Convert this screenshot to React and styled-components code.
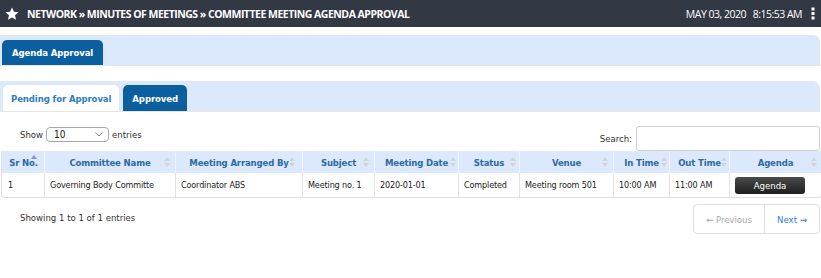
import React from "react";
import styled, { createGlobalStyle } from "styled-components";

const Global = createGlobalStyle`
  html, body { margin: 0; padding: 0; background: #ffffff; }
  body { font-family: "DejaVu Sans Condensed", "DejaVu Sans", sans-serif; }
  * { box-sizing: border-box; }
`;

const Header = styled.header`
  height: 27px;
  background: #323844;
  display: flex;
  align-items: center;
  justify-content: space-between;
  padding: 0 6px 0 5px;
  color: #ffffff;
`;

const HeaderLeft = styled.div`
  display: flex;
  align-items: center;
  gap: 8px;
`;

const Breadcrumb = styled.div`
  font-family: "Open Sans", sans-serif;
  font-weight: 700;
  font-size: 10.5px;
  letter-spacing: -0.5px;
  text-transform: uppercase;
`;

const HeaderRight = styled.div`
  display: flex;
  align-items: center;
  gap: 9px;
  font-family: "Open Sans", sans-serif;
  font-size: 10.5px;
  letter-spacing: -0.5px;
`;

const DateText = styled.span`
  white-space: pre;
`;

const Content = styled.main`
  padding: 8px 1px 0 0;
`;

const TabBar = styled.div`
  height: 31px;
  background: #dce8fb;
  border-radius: 0 7px 0 0;
  border-bottom: 1px solid #e4e6ea;
  display: flex;
  align-items: flex-end;
  gap: 4px;
  padding-left: ${(p) => p.$inset}px;
  margin-top: ${(p) => p.$top}px;
`;

const Tab = styled.div`
  height: ${(p) => p.$h}px;
  padding: 0 ${(p) => p.$px}px;
  display: flex;
  align-items: center;
  border-radius: 5px 5px 0 0;
  font-family: "DejaVu Sans Condensed", "DejaVu Sans", sans-serif;
  font-weight: 700;
  font-size: 9.5px;
  letter-spacing: -0.1px;
  background: ${(p) => (p.$active ? "#0b5f9f" : "#ffffff")};
  color: ${(p) => (p.$active ? "#ffffff" : "#2f7cba")};
`;

const Controls = styled.div`
  display: flex;
  justify-content: space-between;
  align-items: flex-start;
  margin-top: 15px;
  padding-left: 20px;
  font-size: 9.5px;
  color: #333;
`;

const LengthBox = styled.label`
  display: flex;
  align-items: center;
  gap: 3px;
  height: 15px;
`;

const FakeSelect = styled.div`
  width: 63px;
  height: 15px;
  border: 1px solid #a9a9a9;
  border-radius: 4px;
  display: flex;
  align-items: center;
  justify-content: space-between;
  padding: 0 5px 0 7px;
  font-size: 10px;
  color: #222;
  background: #fff;
`;

const SearchBox = styled.label`
  display: flex;
  align-items: center;
  gap: 4px;
  margin-top: -1px;
`;

const SearchInput = styled.div`
  width: 184px;
  height: 25px;
  border: 1px solid #cfcfcf;
  border-radius: 3px;
  background: #fff;
`;

const Table = styled.table`
  width: 819px;
  margin: 0 0 0 1px;
  border-collapse: separate;
  border-spacing: 0;
  border: 1px solid #dedede;
  border-top: none;
  border-radius: 0 0 4px 4px;
  table-layout: fixed;
  font-size: 9px;
  letter-spacing: -0.15px;
`;

const Th = styled.th`
  position: relative;
  height: 22px;
  background: #dce8fb;
  color: #2d6aa6;
  font-weight: 700;
  font-size: 9.5px;
  text-align: center;
  padding: 0 4px;
  border-left: 1px solid ${(p) => (p.$first ? "transparent" : "#f1f5fd")};
  white-space: nowrap;
`;

const SortMark = styled.svg`
  position: absolute;
  right: ${(p) => p.$right}px;
  top: ${(p) => (p.$active ? 4 : 6)}px;
`;

const Td = styled.td`
  height: 24px;
  padding: 0 5px;
  color: #222;
  border-left: 1px solid ${(p) => (p.$first ? "transparent" : "#e3e3e3")};
  white-space: nowrap;
`;

const AgendaButton = styled.button`
  width: 70px;
  height: 17px;
  border: none;
  border-radius: 3px;
  background: linear-gradient(#4a4a4a, #1f1f1f);
  color: #fff;
  font-family: "DejaVu Sans Condensed", "DejaVu Sans", sans-serif;
  font-size: 9.5px;
  padding: 0;
  display: block;
`;

const Footer = styled.div`
  display: flex;
  justify-content: space-between;
  align-items: flex-start;
  margin-top: 6px;
  padding-left: 20px;
  font-size: 9.5px;
  color: #333;
`;

const Info = styled.div`
  padding-top: 8px;
`;

const Pager = styled.div`
  display: flex;
  border: 1px solid #dddddd;
  border-radius: 4px;
  height: 30px;
`;

const PageLink = styled.div`
  display: flex;
  align-items: center;
  justify-content: center;
  width: ${(p) => p.$w}px;
  border-left: ${(p) => (p.$divider ? "1px solid #dddddd" : "none")};
  color: ${(p) => (p.$disabled ? "#a9a9a9" : "#3283c6")};
  font-size: 9.5px;
`;

const Star = () => (
  <svg width="14" height="14" viewBox="0 0 24 24">
    <path
      fill="#ffffff"
      d="M12 1l3.3 7.1 7.7.9-5.8 5.2 1.6 7.7L12 18l-6.8 3.9 1.6-7.7L1 9l7.7-.9z"
    />
  </svg>
);

const Kebab = () => (
  <svg width="4" height="13" viewBox="0 0 4 13">
    <rect x="0.5" y="0.5" width="3" height="3" fill="#fff" />
    <rect x="0.5" y="5" width="3" height="3" fill="#fff" />
    <rect x="0.5" y="9.5" width="3" height="3" fill="#fff" />
  </svg>
);

const Chevron = () => (
  <svg width="8" height="5" viewBox="0 0 8 5">
    <path d="M0.5 0.5L4 4L7.5 0.5" fill="none" stroke="#888" strokeWidth="1" />
  </svg>
);

const Sort = ({ active, right }) => (
  <SortMark $active={active} $right={right} width="6" height="10" viewBox="0 0 6 10">
    <path d="M3 0L6 4H0z" fill={active ? "#8c8ee0" : "#d2d4d8"} />
    {!active && <path d="M3 10L6 6H0z" fill="#d2d4d8" />}
  </SortMark>
);

const columns = [
  { label: "Sr No.", w: 42, active: true, right: 7 },
  { label: "Committee Name", w: 131, right: 5 },
  { label: "Meeting Arranged By", w: 127, right: 7 },
  { label: "Subject", w: 72, right: 5 },
  { label: "Meeting Date", w: 84, right: 2 },
  { label: "Status", w: 61, right: 3 },
  { label: "Venue", w: 94, right: 5 },
  { label: "In Time", w: 56, right: 2 },
  { label: "Out Time", w: 60, right: 2 },
  { label: "Agenda", w: 92, right: 4 },
];

const row = [
  "1",
  "Governing Body Committe",
  "Coordinator ABS",
  "Meeting no. 1",
  "2020-01-01",
  "Completed",
  "Meeting room 501",
  "10:00 AM",
  "11:00 AM",
];

export default function App() {
  return (
    <>
      <Global />
      <Header>
        <HeaderLeft>
          <Star />
          <Breadcrumb>NETWORK » MINUTES OF MEETINGS » COMMITTEE MEETING AGENDA APPROVAL</Breadcrumb>
        </HeaderLeft>
        <HeaderRight>
          <DateText>{"MAY 03, 2020   8:15:53 AM"}</DateText>
          <Kebab />
        </HeaderRight>
      </Header>
      <Content>
        <TabBar $inset={2} $top={0}>
          <Tab $active $h={25} $px={10}>Agenda Approval</Tab>
        </TabBar>
        <TabBar $inset={3} $top={15}>
          <Tab $h={26} $px={8}>Pending for Approval</Tab>
          <Tab $active $h={26} $px={9}>Approved</Tab>
        </TabBar>
        <Controls>
          <LengthBox>
            Show
            <FakeSelect>
              <span>10</span>
              <Chevron />
            </FakeSelect>
            entries
          </LengthBox>
          <SearchBox>
            Search:
            <SearchInput />
          </SearchBox>
        </Controls>
        <Table>
          <colgroup>
            {columns.map((c) => (
              <col key={c.label} style={{ width: c.w }} />
            ))}
          </colgroup>
          <thead>
            <tr>
              {columns.map((c, i) => (
                <Th key={c.label} $first={i === 0}>
                  {c.label}
                  <Sort active={c.active} right={c.right} />
                </Th>
              ))}
            </tr>
          </thead>
          <tbody>
            <tr>
              {row.map((v, i) => (
                <Td key={i} $first={i === 0}>{v}</Td>
              ))}
              <Td>
                <AgendaButton>Agenda</AgendaButton>
              </Td>
            </tr>
          </tbody>
        </Table>
        <Footer>
          <Info>Showing 1 to 1 of 1 entries</Info>
          <Pager>
            <PageLink $w={70} $disabled>← Previous</PageLink>
            <PageLink $w={55} $divider>Next →</PageLink>
          </Pager>
        </Footer>
      </Content>
    </>
  );
}
